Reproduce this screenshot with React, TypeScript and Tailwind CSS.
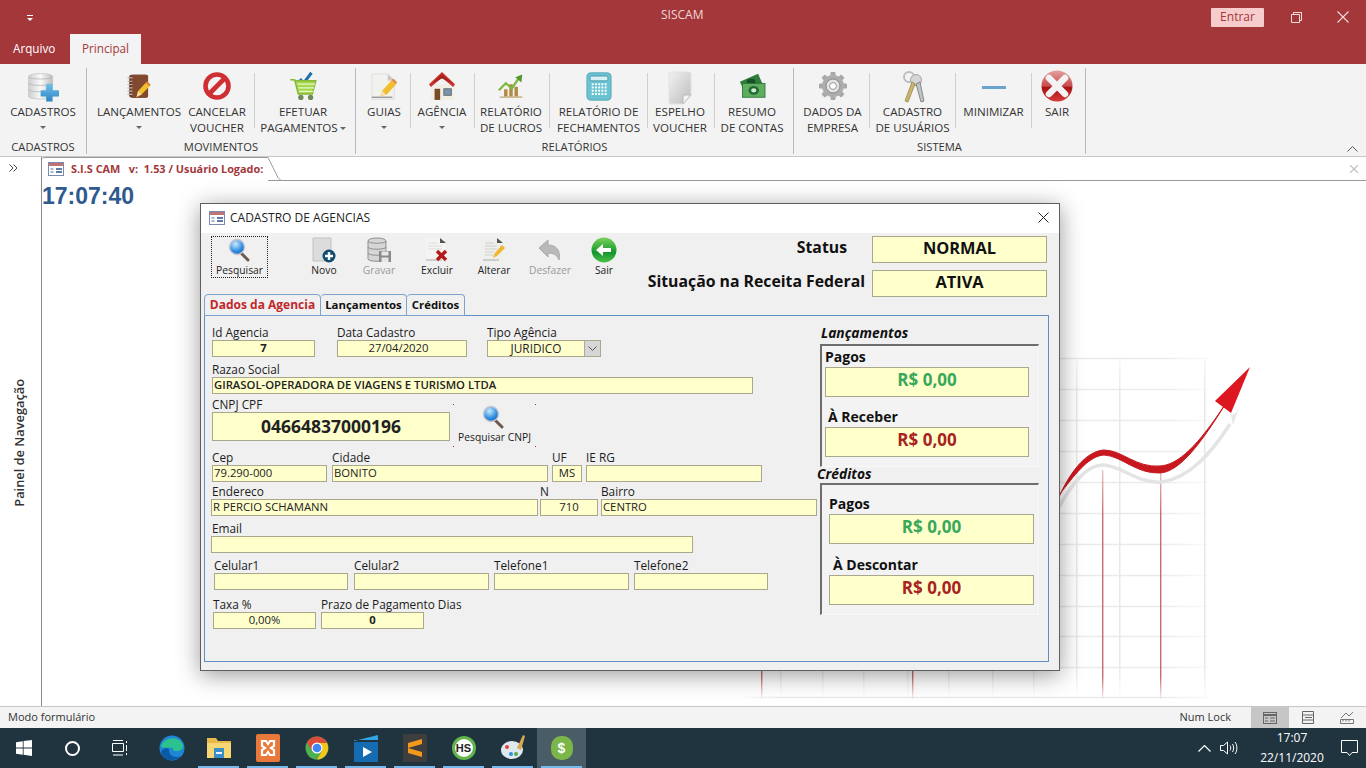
import type { ReactNode } from 'react'

const UI = 'font-["Open_Sans",sans-serif]'

function Db() {
  return (
    <svg className="mt-[2px]" width="32" height="30" viewBox="0 0 40 36">
      <defs>
        <linearGradient id="dbg" x1="0" x2="1"><stop offset="0" stopColor="#cfcfcf" /><stop offset=".5" stopColor="#fafafa" /><stop offset="1" stopColor="#bdbdbd" /></linearGradient>
        <linearGradient id="plusg" x1="0" x2="0" y1="0" y2="1"><stop offset="0" stopColor="#6fc0ea" /><stop offset="1" stopColor="#2f86c4" /></linearGradient>
      </defs>
      <path d="M2 5c0-5 30-5 30 0v25c0 4-30 4-30 0z" fill="url(#dbg)" stroke="#c4c4c4" />
      <path d="M2 5c0 4 30 4 30 0M2 13c0 4 30 4 30 0M2 21c0 4 30 4 30 0" fill="none" stroke="#b5b5b5" />
      <path d="M24 14h8v8h8v8h-8v6h-8v-6h-7v-8h7z" fill="url(#plusg)" />
    </svg>
  )
}

function Notebook() {
  return (
    <svg className="mt-[3px]" width="26" height="28" viewBox="0 0 30 34">
      <rect x="3" y="2" width="23" height="28" rx="3" fill="#6d3d28" />
      <rect x="6" y="2" width="20" height="28" rx="2" fill="#82492f" />
      <path d="M1 6h6M1 10h6M1 14h6M1 18h6M1 22h6M1 26h6" stroke="#bbb" strokeWidth="1.4" />
      <path d="M12 29l2-7 10-11 5 4-11 11z" fill="#f2bf2c" />
      <path d="M12 29l2-7 4 4z" fill="#f7dca0" />
      <path d="M23 12l5 4 1-2-4-4z" fill="#e07f3f" />
    </svg>
  )
}

function NoSign() {
  return (
    <svg className="mt-[1px]" width="30" height="30" viewBox="0 0 30 30">
      <circle cx="15" cy="15" r="11.5" fill="none" stroke="#cf2f33" strokeWidth="4.6" />
      <path d="M7 23L23 7" stroke="#cf2f33" strokeWidth="4.6" />
    </svg>
  )
}

function Cart() {
  return (
    <svg className="mt-[1px]" width="29" height="30" viewBox="0 0 32 34">
      <path d="M12 9l4 5 9-12" fill="none" stroke="#1f6fa8" strokeWidth="3.4" />
      <path d="M1 10h5l4 16h16l4-15H7" fill="#a5d64c" stroke="#86b83a" strokeWidth="1.6" />
      <path d="M9 15h20M10 19h18M11 23h16" stroke="#eaf7c8" strokeWidth="1.4" />
      <circle cx="13" cy="30" r="3" fill="#6f8a5a" />
      <circle cx="24" cy="30" r="3" fill="#6f8a5a" />
    </svg>
  )
}

function DocPen() {
  return (
    <svg className="mt-[2px]" width="28" height="30" viewBox="0 0 30 32">
      <path d="M2 2h17l7 7v20H2z" fill="#f1f1ee" stroke="#ddd" />
      <path d="M19 2l7 7h-7z" fill="#c9c9c4" />
      <path d="M2 27h22" stroke="#999" strokeWidth="1.5" />
      <path d="M11 26l2-6 10-11 5 4-10 11z" fill="#f2bf2c" />
      <path d="M11 26l2-6 4 4z" fill="#f8e2b3" />
      <path d="M23 9l5 4 1-2-4-4z" fill="#e28a46" />
    </svg>
  )
}

function House() {
  return (
    <svg className="mt-[1px]" width="26" height="30" viewBox="0 0 28 32">
      <path d="M2 14h24v17H2z" fill="#f1eee6" />
      <path d="M0 14L14 1l14 13-2 3L14 7 2 17z" fill="#c8352c" />
      <path d="M3 13L14 3l11 10-11-5z" fill="#a6231d" />
      <rect x="6" y="19" width="6" height="12" fill="#7a4a26" />
      <rect x="16" y="19" width="8" height="7" fill="#7895b3" stroke="#666" />
    </svg>
  )
}

function ChartCoins() {
  return (
    <svg className="mt-[2px]" width="28" height="26" viewBox="0 0 30 30">
      <path d="M7 29V20h4v9zM13 29V14h4v15zM19 29V17h4v12z" fill="#b28a45" />
      <path d="M1 21l8-8 7 6 8-12" fill="none" stroke="#7db83a" strokeWidth="2.6" />
      <path d="M20 6l8-3-1 9z" fill="#4f9a2d" />
      <path d="M2 29h26" stroke="#cdbb94" strokeWidth="2" />
    </svg>
  )
}

function Calc() {
  const keys = []
  for (let r = 0; r < 4; r++) for (let c = 0; c < 5; c++) keys.push(<rect key={r + '-' + c} x={7 + c * 4} y={14 + r * 4} width="2.4" height="2.4" fill="#fff" />)
  return (
    <svg className="mt-[2px]" width="26" height="29" viewBox="0 0 32 36">
      <rect x="1" y="1" width="30" height="34" rx="5" fill="#6bc3d2" stroke="#4aa0b2" />
      <rect x="5" y="5" width="22" height="6" rx="2" fill="#d6f0f3" stroke="#3d8fa2" />
      {keys}
    </svg>
  )
}

function BlankPage() {
  return (
    <svg className="mt-[1px]" width="28" height="34" viewBox="0 0 28 34">
      <defs><linearGradient id="pg" x1="0" y1="0" x2="1" y2="1"><stop offset="0" stopColor="#f1f1f1" /><stop offset="1" stopColor="#bdbdbd" /></linearGradient></defs>
      <path d="M3 3a2 2 0 012-2h18a2 2 0 012 2v21l-8 9H5a2 2 0 01-2-2z" fill="url(#pg)" stroke="#e2e2e2" />
      <path d="M25 24l-8 9v-7a2 2 0 012-2z" fill="#f4f4f4" stroke="#bbb" />
    </svg>
  )
}

function Money() {
  return (
    <svg className="mt-[3px]" width="28" height="26" viewBox="0 0 30 30">
      <path d="M1 10L22 1l5 11-21 9z" fill="#2f7d3d" />
      <ellipse cx="14" cy="10" rx="5" ry="3.5" fill="#16502a" />
      <rect x="4" y="12" width="26" height="16" fill="#5fae5f" stroke="#2a7437" />
      <ellipse cx="17" cy="20" rx="6" ry="5" fill="#1f6a33" />
      <ellipse cx="17" cy="20" rx="3" ry="2.5" fill="#cfe8c8" />
    </svg>
  )
}

function Gear() {
  const teeth = [0, 45, 90, 135].map(a => <rect key={a} x="12.5" y="1" width="5" height="28" rx="1" fill="#a8a8a8" transform={`rotate(${a} 15 15)`} />)
  return (
    <svg className="mt-[1px]" width="30" height="30" viewBox="0 0 30 30">
      {teeth}
      <circle cx="15" cy="15" r="11" fill="#adadad" />
      <circle cx="15" cy="15" r="7" fill="#e3e3e3" stroke="#888" />
      <circle cx="15" cy="15" r="3.4" fill="#fff" stroke="#999" />
    </svg>
  )
}

function Keys() {
  return (
    <svg className="mt-[1px]" width="26" height="32" viewBox="0 0 26 32">
      <circle cx="9" cy="6" r="5" fill="none" stroke="#bdbdbd" strokeWidth="2" />
      <circle cx="16" cy="9" r="5.5" fill="#d5d5d5" stroke="#a6a6a6" />
      <path d="M12 11L5 30l3 1 7-18z" fill="#cdb76b" stroke="#8b7a3f" strokeWidth=".7" />
      <path d="M16 13l5 18 3-1-4-19z" fill="#bfc4c4" stroke="#666" strokeWidth=".7" />
    </svg>
  )
}

function MinusIcon() {
  return <div className="mt-[16px] h-[3px] w-[24px] bg-[#6ba3cc]" />
}

function RedX() {
  return (
    <svg width="32" height="32" viewBox="0 0 32 32">
      <defs><linearGradient id="rx" x1="0" x2="0" y1="0" y2="1"><stop offset="0" stopColor="#e3a1a1" /><stop offset=".5" stopColor="#c94b4b" /><stop offset=".55" stopColor="#a51414" /><stop offset="1" stopColor="#d83a3a" /></linearGradient></defs>
      <circle cx="16" cy="16" r="15.5" fill="url(#rx)" />
      <path d="M8 8l16 16M24 8L8 24" stroke="#f3f3f3" strokeWidth="6.5" strokeLinecap="round" />
    </svg>
  )
}

function Magnifier({ size = 24 }: { size?: number }) {
  return (
    <svg width={size} height={size} viewBox="0 0 24 24">
      <defs><radialGradient id="mg" cx=".4" cy=".3" r=".8"><stop offset="0" stopColor="#cdeafb" /><stop offset=".6" stopColor="#2f8fe0" /><stop offset="1" stopColor="#1c5fa8" /></radialGradient></defs>
      <path d="M14 15l7 7" stroke="#6b5a50" strokeWidth="3" strokeLinecap="round" />
      <circle cx="10" cy="9" r="7.5" fill="url(#mg)" stroke="#c6c6d6" strokeWidth="1.4" />
    </svg>
  )
}

function NewDoc() {
  return (
    <svg width="24" height="26" viewBox="0 0 24 26">
      <path d="M1 1h18v23H1z" fill="#dcdcdc" stroke="#c2c2c2" />
      <circle cx="17" cy="19" r="6.5" fill="#0f4c70" />
      <path d="M13 19h8M17 15v8" stroke="#fff" strokeWidth="2.4" />
    </svg>
  )
}

function DbSave() {
  return (
    <svg width="26" height="26" viewBox="0 0 26 26">
      <path d="M2 4c0-4 18-4 18 0v18c0 3-18 3-18 0z" fill="#d6d6d6" stroke="#8f8f8f" />
      <path d="M2 4c0 3 18 3 18 0M2 10c0 3 18 3 18 0M2 16c0 3 18 3 18 0" fill="none" stroke="#8f8f8f" />
      <rect x="13" y="14" width="12" height="11" fill="#8a8a8a" />
      <rect x="15.5" y="14.5" width="7" height="4" fill="#e8e8e8" />
      <rect x="15.5" y="20.5" width="7" height="4.5" fill="#e8e8e8" />
    </svg>
  )
}

function DocX() {
  return (
    <svg width="24" height="26" viewBox="0 0 24 26">
      <path d="M1 1h14l6 5v18H1z" fill="#f4f4f2" />
      <path d="M15 1l6 5h-6z" fill="#555" />
      <path d="M3 6h9M3 9h14M3 12h14" stroke="#ddd" />
      <path d="M1 23h16" stroke="#aaa" />
      <path d="M12 14l9 9M21 14l-9 9" stroke="#b3191b" strokeWidth="3.4" />
    </svg>
  )
}

function DocEdit() {
  return (
    <svg width="24" height="26" viewBox="0 0 24 26">
      <path d="M1 1h14l6 5v18H1z" fill="#efefec" />
      <path d="M15 1l6 5h-6z" fill="#555" />
      <path d="M3 6h9M3 9h12M3 12h12M3 15h9M3 18h9" stroke="#cfcfcf" />
      <path d="M1 23h16" stroke="#aaa" />
      <path d="M11 21l2-5 7-8 3 3-8 8z" fill="#f0b62c" />
    </svg>
  )
}

function UndoGray() {
  return (
    <svg width="24" height="24" viewBox="0 0 24 24">
      <path d="M1 10l9-8v5c8 0 13 5 11 15-2-5-5-7-11-7v4z" fill="#b9b9b9" stroke="#a8a8a8" />
    </svg>
  )
}

function GreenBack() {
  return (
    <svg width="26" height="26" viewBox="0 0 26 26">
      <defs><linearGradient id="gb" x1="0" x2="0" y1="0" y2="1"><stop offset="0" stopColor="#7bd25a" /><stop offset=".6" stopColor="#14962c" /><stop offset="1" stopColor="#4cc24a" /></linearGradient></defs>
      <circle cx="13" cy="13" r="12.5" fill="url(#gb)" />
      <path d="M5 13l7-6v4h8v4h-8v4z" fill="#fff" />
    </svg>
  )
}

function FormIcon({ c = '#a4373a' }: { c?: string }) {
  return (
    <svg width="16" height="14" viewBox="0 0 16 14">
      <rect x=".5" y=".5" width="15" height="13" fill="#fff" stroke="#7b8bb0" />
      <rect x="1" y="1" width="14" height="3" fill={c} opacity=".7" />
      <path d="M2.500 7h3M2.500 10h3" stroke="#4a6fa0" />
      <rect x="8" y="6" width="6" height="2" fill="#5c7cab" />
      <rect x="8" y="9" width="6" height="2" fill="#5c7cab" />
    </svg>
  )
}

function RibbonBtn({ w, icon, l1, l2, caret }: { w: string; icon: ReactNode; l1: string; l2?: string; caret?: boolean }) {
  return (
    <div className={`${w} flex shrink-0 flex-col items-center`}>
      <div className="flex h-[34px] shrink-0 items-start justify-center">{icon}</div>
      <div className="whitespace-nowrap text-center text-[11.600px] leading-[16px] text-[#333]">{l1}</div>
      {l2 ? (
        <div className="whitespace-nowrap text-center text-[11.600px] leading-[16px] text-[#333]">
          {l2}
          {caret && <span className="ml-[2px] inline-block h-0 w-0 border-x-[3px] border-t-[3px] border-x-transparent border-t-[#666] align-middle" />}
        </div>
      ) : (
        caret && <div className="mt-[6px] h-0 w-0 border-x-[3px] border-t-[3px] border-x-transparent border-t-[#666]" />
      )}
    </div>
  )
}

function Sep({ cls = '' }: { cls?: string }) {
  return <div className={`mt-[3px] h-[55px] w-px shrink-0 bg-[#d0d0d0] ${cls}`} />
}

function Group({ w, label, children }: { w: string; label: string; children: ReactNode }) {
  return (
    <div className={`${w} flex h-[86px] shrink-0 flex-col border-r border-[#b9b9b9]`}>
      <div className="flex h-[72px] shrink-0 pt-[2px]">{children}</div>
      <div className="text-center text-[11.200px] leading-[14px] text-[#333]">{label}</div>
    </div>
  )
}

function ToolBtn({ cls, icon, label, off }: { cls: string; icon: ReactNode; label: string; off?: boolean }) {
  return (
    <div className={`${cls} flex h-[42px] w-[54px] shrink-0 flex-col items-center justify-end`}>
      <div className="flex h-[26px] items-center">{icon}</div>
      <div className={`pb-px text-[10.300px] leading-[14px] ${off ? 'text-[#9a9a9a]' : 'text-[#222]'}`}>{label}</div>
    </div>
  )
}

function Field({ label, value, w, h = 'h-[17px]', cls = '', box = '', lbl = '' }: { label: string; value?: string; w: string; h?: string; cls?: string; box?: string; lbl?: string }) {
  return (
    <div className={`${w} ${cls} shrink-0`}>
      <div className={`h-[15px] whitespace-nowrap text-[11.800px] leading-[14px] text-[#1c1c1c] ${lbl}`}>{label}</div>
      <div className={`${h} flex items-center overflow-hidden whitespace-nowrap border border-[#a9a78c] bg-[#ffffcc] px-[1px] pb-px text-[11.300px] text-[#222] ${box}`}>{value}</div>
    </div>
  )
}

function Money2({ label, value, color, cls, w, lbl }: { label: string; value: string; color: string; cls: string; w: string; lbl: string }) {
  return (
    <div className={cls}>
      <div className={`h-[20px] text-[14px] font-bold leading-[20px] text-[#111] ${lbl}`}>{label}</div>
      <div className={`${w} flex h-[30px] items-center justify-center border border-[#a9a78c] bg-[#ffffcc] pb-[4px] text-[17px] font-bold ${color}`}>{value}</div>
    </div>
  )
}

function BgChart() {
  const hs = [358, 389, 420, 451, 482, 513, 544, 575, 606, 636, 667, 697]
  const vs = [780, 822, 863, 907, 948, 992, 1033, 1076, 1119, 1204]
  return (
    <svg className="absolute left-[735px] top-[350px]" width="530" height="355" viewBox="735 350 530 355">
      <defs>
        <linearGradient id="fadeH" gradientUnits="userSpaceOnUse" x1="735" x2="1210" y1="0" y2="0">
          <stop offset="0" stopColor="#ebebeb" stopOpacity="0" />
          <stop offset=".1" stopColor="#ebebeb" />
          <stop offset=".9" stopColor="#ebebeb" />
          <stop offset="1" stopColor="#ebebeb" stopOpacity=".2" />
        </linearGradient>
        <linearGradient id="fadeV" gradientUnits="userSpaceOnUse" x1="0" x2="0" y1="358" y2="700">
          <stop offset="0" stopColor="#e8e8e8" stopOpacity=".3" />
          <stop offset=".1" stopColor="#e8e8e8" />
          <stop offset=".9" stopColor="#e8e8e8" />
          <stop offset="1" stopColor="#e8e8e8" stopOpacity="0" />
        </linearGradient>
        <linearGradient id="fadeR" gradientUnits="userSpaceOnUse" x1="0" x2="0" y1="470" y2="700">
          <stop offset="0" stopColor="#c96a6c" stopOpacity=".4" />
          <stop offset=".2" stopColor="#c96a6c" />
          <stop offset=".9" stopColor="#c96a6c" />
          <stop offset="1" stopColor="#c96a6c" stopOpacity="0" />
        </linearGradient>
      </defs>
      {hs.map(y => <path key={y} d={`M735 ${y}.5H1210`} stroke="url(#fadeH)" strokeWidth="1.400" />)}
      {vs.map(x => <rect key={x} x={x} y="358" width="1.500" height="342" fill="url(#fadeV)" />)}
      {[761, 912, 1102, 1160].map(x => <rect key={x} x={x} y="470" width="1.400" height="230" fill="url(#fadeR)" />)}
      <path d="M1059 507C1075 478 1090 464 1104 465C1122 466 1138 484 1162 482C1190 478 1212 452 1230 424" fill="none" stroke="#e4e4e4" strokeWidth="3.500" />
      <path d="M1059 497C1072 468 1088 451 1104 450C1122 450 1136 468 1160 466C1178 465 1198 446 1226 403C1202 442 1180 472 1160 473C1136 474 1122 456 1104 455C1088 456 1074 476 1059 495z" fill="#c8181f" stroke="#c8181f" />
      <path d="M1236 413L1231 415L1233 425L1240 405z" fill="#e8e8e8" />
      <path d="M1250 367L1215 401L1231 413z" fill="#dc1720" />
    </svg>
  )
}

const taskIcons: ReactNode[] = [
  <svg key="edge" width="26" height="26" viewBox="0 0 26 26"><circle cx="13" cy="13" r="12.500" fill="#1f86d6" /><path d="M2 11C5 2 20 0 24 10c1 4-3 6-7 6-3 0-4-2-3-3-6-1-10 1-12-2z" fill="#2cc28e" /><path d="M10 14c-1 6 5 10 12 7-5 6-18 6-20-4 2-4 6-5 8-3z" fill="#0c59a4" /></svg>,
  <svg key="folder" width="24" height="22" viewBox="0 0 24 22"><path d="M0 1h9l2 3h13v17H0z" fill="#e9b949" /><rect y="6" width="24" height="15" fill="#f7d774" /><rect x="7" y="11" width="10" height="10" fill="#3a8fc8" /><rect x="9" y="15" width="6" height="2" fill="#e9f4fb" /></svg>,
  <svg key="xampp" width="24" height="28" viewBox="0 0 24 28"><rect width="24" height="28" rx="2" fill="#e8793a" /><path d="M6 7h4l2 3 2-3h4v5l-3 2 3 2v5h-4l-2-3-2 3H6v-5l3-2-3-2z" fill="none" stroke="#fff" strokeWidth="2.200" /></svg>,
  <svg key="chrome" width="24" height="26" viewBox="0 0 24 24"><circle cx="12" cy="12" r="11.500" fill="#4caf50" /><path d="M12 .5A11.500 11.500 0 002 6.500l5 8.500 5-8h10A11.500 11.500 0 0012 .5z" fill="#dd4b39" /><path d="M22 7H12l5 8-5 8.500A11.500 11.500 0 0022 7z" fill="#f5c518" /><circle cx="12" cy="12" r="5.500" fill="#fff" /><circle cx="12" cy="12" r="4.300" fill="#4285f4" /></svg>,
  <svg key="film" width="24" height="28" viewBox="0 0 24 28"><path d="M0 7L24 1v5H0z" fill="#32a5e5" /><rect y="8" width="24" height="20" fill="#156cb0" /><path d="M9 13l9 5-9 5z" fill="#fff" /></svg>,
  <svg key="subl" width="24" height="28" viewBox="0 0 24 28"><rect width="24" height="28" fill="#3e3e3e" /><path d="M5 9l14-4v5l-14 4zM5 14l14 4v5L5 19z" fill="#f39a1c" /></svg>,
  <div key="hs" className="flex h-[24px] w-[24px] items-center justify-center rounded-full border-[3px] border-[#5fb54a] bg-white font-['Liberation_Sans',sans-serif] text-[11px] font-bold text-[#222]">HS</div>,
  <svg key="paint" width="26" height="28" viewBox="0 0 26 28"><ellipse cx="12" cy="16" rx="11" ry="9" fill="#dfe7ef" /><circle cx="7" cy="13" r="2" fill="#e2442f" /><circle cx="11" cy="20" r="2" fill="#2f8fd8" /><circle cx="16" cy="20" r="2" fill="#4caf50" /><path d="M17 14L23 1l2 1-4 14z" fill="#d9a84f" /></svg>,
  <div key="dollar" className="flex h-[24px] w-[22px] items-center justify-center rounded-[10px] bg-[#7ab648] font-['Liberation_Sans',sans-serif] text-[14px] font-bold text-white">$</div>,
]

export default function App() {
  return (
    <div className={`relative flex h-[768px] w-[1366px] flex-col overflow-hidden bg-white ${UI}`}>
      {/* title bar */}
      <div className="h-[64px] shrink-0 bg-[#a4373a] text-white">
        <div className="flex h-[34px] items-center">
          <div className="ml-[26px] flex w-[7px] flex-col items-center gap-[2px] pt-[1px]">
            <div className="h-px w-[6px] bg-white" />
            <div className="h-0 w-0 border-x-[3px] border-t-[3px] border-x-transparent border-t-white" />
          </div>
          <div className="ml-[628px] pb-[4px] text-[12px] text-[#f0d6d6]">SISCAM</div>
          <div className="ml-auto flex h-[19px] w-[53px] items-center justify-center rounded-[1px] bg-[#f6cccc] text-[12px] text-[#a4373a]">Entrar</div>
          <div className="ml-[27px] mr-[17px] flex items-center gap-[35px]">
            <svg width="11" height="11" viewBox="0 0 11 11" fill="none" stroke="#f3dede"><path d="M.5 2.500h8v8h-8zM2.500 2.500v-2h8v8h-2" /></svg>
            <svg width="12" height="12" viewBox="0 0 12 12" stroke="#f3dede" strokeWidth="1.100"><path d="M.5.5l11 11M11.500.5l-11 11" /></svg>
          </div>
        </div>
        <div className="flex h-[30px] items-center text-[11.700px]">
          <div className="ml-[13px] w-[57px]">Arquivo</div>
          <div className="flex h-[30px] w-[71px] items-center justify-center bg-[#f3f3f3] text-[#a4373a]">Principal</div>
        </div>
      </div>

      {/* ribbon */}
      <div className="relative flex h-[93px] shrink-0 border-b border-[#c8c8c8] bg-[#f3f3f3] pt-[4px]">
        <Group w="w-[87px]" label="CADASTROS">
          <RibbonBtn w="w-[86px]" icon={<Db />} l1="CADASTROS" caret />
        </Group>
        <Group w="w-[269px]" label="MOVIMENTOS">
          <RibbonBtn w="w-[96px] ml-[4px]" icon={<Notebook />} l1="LANÇAMENTOS" caret />
          <RibbonBtn w="w-[60px]" icon={<NoSign />} l1="CANCELAR" l2="VOUCHER" />
          <Sep cls="ml-[7px]" />
          <RibbonBtn w="w-[96px]" icon={<Cart />} l1="EFETUAR" l2="PAGAMENTOS" caret />
        </Group>
        <Group w="w-[438px]" label="RELATÓRIOS">
          <RibbonBtn w="w-[52px] ml-[2px]" icon={<DocPen />} l1="GUIAS" caret />
          <Sep />
          <RibbonBtn w="w-[62px]" icon={<House />} l1="AGÊNCIA" caret />
          <Sep cls="ml-[1px]" />
          <RibbonBtn w="w-[72px]" icon={<ChartCoins />} l1="RELATÓRIO" l2="DE LUCROS" />
          <Sep cls="ml-[2px]" />
          <RibbonBtn w="w-[97px]" icon={<Calc />} l1="RELATÓRIO DE" l2="FECHAMENTOS" />
          <Sep />
          <RibbonBtn w="w-[64px]" icon={<BlankPage />} l1="ESPELHO" l2="VOUCHER" />
          <Sep cls="ml-[2px]" />
          <RibbonBtn w="w-[74px]" icon={<Money />} l1="RESUMO" l2="DE CONTAS" />
        </Group>
        <Group w="w-[292px]" label="SISTEMA">
          <RibbonBtn w="w-[73px] ml-[2px]" icon={<Gear />} l1="DADOS DA" l2="EMPRESA" />
          <Sep />
          <RibbonBtn w="w-[85px]" icon={<Keys />} l1="CADASTRO" l2="DE USUÁRIOS" />
          <Sep />
          <RibbonBtn w="w-[75px]" icon={<MinusIcon />} l1="MINIMIZAR" />
          <Sep />
          <RibbonBtn w="w-[50px]" icon={<RedX />} l1="SAIR" />
        </Group>
        <svg className="absolute right-[8px] top-[82px]" width="11" height="6" viewBox="0 0 11 6" fill="none" stroke="#555"><path d="M.5 5.500l5-5 5 5" /></svg>
      </div>

      {/* content */}
      <div className="flex min-h-0 flex-1">
        <div className="relative w-[42px] shrink-0 border-r border-[#8a8a8a]">
          <svg className="ml-[9px] mt-[7px]" width="9" height="8" viewBox="0 0 9 8" fill="none" stroke="#444"><path d="M.5.5l3.500 3.500-3.500 3.500M4.500.5l3.500 3.500-3.500 3.500" /></svg>
          <div className="absolute left-[10px] top-[222px] rotate-180 whitespace-nowrap text-[12.800px] font-semibold text-[#333] [writing-mode:vertical-rl]">Painel de Navegação</div>
        </div>
        <div className="min-w-0 flex-1">
          <div className="flex h-[24px] items-center border-b border-[#9a9a9a]">
            <div className="relative flex h-[24px] w-[226px] items-center rounded-tl-[3px] border-t border-[#9a9a9a] bg-white pl-[6px]">
              <FormIcon />
              <span className="ml-[7px] whitespace-pre text-[10.900px] font-bold text-[#a4373a]">S.I.S CAM   v:  1.53 / Usuário Logado:</span>
              <svg className="absolute left-[224px] -top-px" width="18" height="24" viewBox="0 0 18 24" fill="none" stroke="#9a9a9a"><path d="M0 .5h2l10 20 3 3" /></svg>
              <div className="absolute -bottom-[2px] left-0 h-[2px] w-[234px] bg-white" />
            </div>
            <svg className="ml-auto mr-[8px]" width="8" height="8" viewBox="0 0 8 8" stroke="#c4c4c4" strokeWidth="1.300"><path d="M0 0l8 8M8 0L0 8" /></svg>
          </div>
          <div className="font-['Liberation_Sans',sans-serif] text-[23px] font-bold leading-[30px] text-[#2f5a8f]">17:07:40</div>
        </div>
      </div>

      {/* status bar */}
      <div className="flex h-[22px] shrink-0 items-center border-t border-[#c6c6c6] bg-[#f3f3f3] text-[11px] text-[#333]">
        <div className="pl-[8px]">Modo formulário</div>
        <div className="ml-auto">Num Lock</div>
        <div className="ml-[20px] flex h-full w-[38px] items-center justify-center bg-[#c6c6c6]">
          <svg width="14" height="12" viewBox="0 0 14 12"><rect x=".5" y=".5" width="13" height="11" fill="none" stroke="#666" /><path d="M.5 3h13" stroke="#666" strokeWidth="2" /><path d="M2 6h3M2 9h3M7 6h5M7 9h5" stroke="#666" /></svg>
        </div>
        <div className="flex h-full w-[38px] items-center justify-center">
          <svg width="12" height="13" viewBox="0 0 12 13" fill="none" stroke="#666"><path d="M.5.5h11v12H.5zM.5 4h11M.5 9h11M3 6.500h7" /></svg>
        </div>
        <div className="flex h-full w-[39px] items-center justify-center">
          <svg width="14" height="13" viewBox="0 0 14 13" fill="none" stroke="#777"><path d="M.5 8.500h13v4H.5zM3 8.500v2M6 8.500v2M9 8.500v2M1 7l5-5 3 3 4-4" /></svg>
        </div>
      </div>

      {/* taskbar */}
      <div className="flex h-[40px] shrink-0 items-center bg-[#20343f] text-white">
        <div className="flex w-[48px] justify-center">
          <svg width="16" height="16" viewBox="0 0 16 16" fill="#fff"><path d="M0 2.200l6.800-1v6.400H0zM7.600 1L16 0v7.600H7.600zM0 8.400h6.800v6.400L0 13.800zM7.600 8.400H16V16l-8.400-1.200z" /></svg>
        </div>
        <div className="flex w-[48px] justify-center"><div className="h-[15px] w-[15px] rounded-full border-2 border-white" /></div>
        <div className="flex w-[48px] justify-center">
          <svg width="17" height="16" viewBox="0 0 17 16" fill="none" stroke="#fff"><path d="M.5 3.500h11v8H.5zM1 .5h10M1 15h10M14.500 1v2M14.500 5v6M14.500 13v2" /></svg>
        </div>
        <div className="flex w-[50px] justify-center pl-[5px]">{taskIcons[0]}</div>
        {taskIcons.slice(1).map((ic, i) => (
          <div key={i} className={`relative flex h-[40px] w-[49px] items-center justify-center ${i === 7 ? 'bg-[#4a5c66]' : ''}`}>
            {ic}
            <div className="absolute bottom-0 left-[4px] right-[4px] h-[2px] bg-[#76b9ed]" />
          </div>
        ))}
        <svg className="ml-[612px]" width="13" height="7" viewBox="0 0 13 7" fill="none" stroke="#fff" strokeWidth="1.200"><path d="M.5 6.500l6-6 6 6" /></svg>
        <svg className="ml-[9px]" width="18" height="14" viewBox="0 0 18 14" fill="none" stroke="#fff"><path d="M.5 4.500h3l4-3.500v12l-4-3.500h-3zM10 4.500c1 1 1 4 0 5M12.500 3c1.500 2 1.500 6 0 8M15 1c2.500 3 2.500 9 0 12" /></svg>
        <div className="ml-[15px] w-[78px] text-center text-[12px] leading-[20px]">
          <div>17:07</div>
          <div>22/11/2020</div>
        </div>
        <svg className="ml-[10px]" width="17" height="16" viewBox="0 0 17 16" fill="none" stroke="#fff"><path d="M.5.500h16v12H11l-2.500 3-2.500-3H.5z" /></svg>
      </div>

      <BgChart />

      {/* modal */}
      <div className="absolute left-[200px] top-[203px] flex h-[468px] w-[860px] flex-col border border-[#5f5f5f] bg-[#f0f0f0] shadow-[0_4px_22px_rgba(0,0,0,0.4)]">
        <div className="flex h-[29px] shrink-0 items-center bg-white pb-[2px] pl-[8px] text-[12px] text-[#222]">
          <FormIcon />
          <span className="ml-[5px]">CADASTRO DE AGENCIAS</span>
          <svg className="ml-auto mr-[10px]" width="11" height="11" viewBox="0 0 11 11" stroke="#222"><path d="M.5.500l10 10M10.500.500l-10 10" /></svg>
        </div>
        <div className="flex h-[61px] shrink-0 items-start pl-[10px] pt-[3px]">
          <div className="flex h-[42px] w-[57px] shrink-0 flex-col items-center justify-end border border-dotted border-[#222]">
            <div className="flex h-[26px] items-center pr-[2px]"><Magnifier /></div>
            <div className="text-[10.300px] leading-[14px] text-[#222]">Pesquisar</div>
          </div>
          <ToolBtn cls="ml-[29px]" icon={<NewDoc />} label="Novo" />
          <ToolBtn cls="ml-[1px]" icon={<DbSave />} label="Gravar" off />
          <ToolBtn cls="ml-[4px]" icon={<DocX />} label="Excluir" />
          <ToolBtn cls="ml-[3px]" icon={<DocEdit />} label="Alterar" />
          <ToolBtn cls="ml-[2px]" icon={<UndoGray />} label="Desfazer" off />
          <ToolBtn cls="" icon={<GreenBack />} label="Sair" />
          <div className="ml-auto mr-[12px] flex flex-col gap-[7px]">
            <div className="flex items-center justify-end">
              <span className="mr-[25px] pb-[3px] text-[15.800px] font-bold text-[#111]">Status</span>
              <div className="flex h-[27px] w-[175px] items-center justify-center border border-[#a9a78c] bg-[#ffffcc] pb-[2px] text-[16.400px] font-bold text-[#111]">NORMAL</div>
            </div>
            <div className="flex items-center justify-end">
              <span className="mr-[7px] pb-[3px] whitespace-nowrap text-[15.800px] font-bold text-[#111]">Situação na Receita Federal</span>
              <div className="flex h-[27px] w-[175px] items-center justify-center border border-[#a9a78c] bg-[#ffffcc] pb-[2px] text-[16.400px] font-bold text-[#111]">ATIVA</div>
            </div>
          </div>
        </div>
        <div className="relative z-10 flex h-[22px] shrink-0 pl-[3px] text-[11.400px] font-bold">
          <div className="flex w-[117px] items-center justify-center rounded-t-[4px] border border-[#7da2ce] bg-[#f0f0f0] text-[12px] text-[#c0272d]">Dados da Agencia</div>
          <div className="flex w-[86px] items-center justify-center rounded-t-[4px] border border-l-0 border-[#7da2ce] text-[#111]">Lançamentos</div>
          <div className="flex w-[58px] items-center justify-center rounded-t-[4px] border border-l-0 border-[#7da2ce] text-[#111]">Créditos</div>
        </div>
        <div className="-mt-px ml-[3px] flex h-[347px] w-[845px] shrink-0 border border-[#5f8fc0]">
          <div className="w-[614px] shrink-0 pl-[7px] pt-[9px]">
            <div className="flex">
              <Field label="Id Agencia" value="7" w="w-[103px]" box="justify-center font-bold" />
              <Field label="Data Cadastro" value="27/04/2020" w="w-[130px]" cls="ml-[22px]" box="justify-center pr-[8px]" />
              <div className="ml-[20px] w-[114px] shrink-0">
                <div className="h-[15px] text-[11.800px] leading-[14px] text-[#1c1c1c]">Tipo Agência</div>
                <div className="flex h-[17px] border border-[#a9a78c] bg-[#ffffcc] text-[11.800px] text-[#222]">
                  <div className="flex-1 text-center leading-[14px]">JURIDICO</div>
                  <div className="flex w-[16px] items-center justify-center border-l border-[#a9a9a9] bg-[#d6d6d6]">
                    <svg width="9" height="5" viewBox="0 0 9 5" fill="none" stroke="#555"><path d="M.5.500l4 4 4-4" /></svg>
                  </div>
                </div>
              </div>
            </div>
            <Field label="Razao Social" value="GIRASOL-OPERADORA DE VIAGENS E TURISMO LTDA" w="w-[541px]" cls="mt-[5px]" box="font-semibold text-[11.200px]" />
            <div className="mt-[3px] flex">
              <Field label="CNPJ CPF" value="04664837000196" w="w-[238px]" h="h-[29px]" box="justify-center text-[17.500px] font-bold text-[#111]" />
              <div className="relative ml-[3px] mt-[7px] flex h-[43px] w-[83px] flex-col items-center justify-end">
                <div className="absolute left-0 top-0 h-px w-px bg-[#c0272d]" />
                <div className="absolute right-0 top-0 h-px w-px bg-[#c0272d]" />
                <div className="absolute bottom-0 left-0 h-px w-px bg-[#c0272d]" />
                <div className="absolute bottom-0 right-0 h-px w-px bg-[#c0272d]" />
                <div className="pr-[3px]"><Magnifier /></div>
                <div className="mb-[3px] mt-[1px] text-[10.300px] leading-[14px] text-[#222]">Pesquisar CNPJ</div>
              </div>
            </div>
            <div className="mt-[3px] flex">
              <Field label="Cep" value="79.290-000" w="w-[115px]" />
              <Field label="Cidade" value="BONITO" w="w-[216px]" cls="ml-[5px]" />
              <Field label="UF" value="MS" w="w-[30px]" cls="ml-[4px]" box="justify-center" />
              <Field label="IE RG" w="w-[176px]" cls="ml-[4px]" />
            </div>
            <div className="-ml-px mt-[2px] flex">
              <Field label="Endereco" value="R PERCIO SCHAMANN" w="w-[327px]" lbl="pl-px" />
              <Field label="N" value="710" w="w-[58px]" cls="ml-[2px]" box="justify-center" />
              <Field label="Bairro" value="CENTRO" w="w-[216px]" cls="ml-[3px]" />
            </div>
            <Field label="Email" w="w-[482px]" cls="-ml-px mt-[5px]" lbl="pl-px" />
            <div className="ml-[2px] mt-[5px] flex">
              <Field label="Celular1" w="w-[134px]" />
              <Field label="Celular2" w="w-[135px]" cls="ml-[6px]" />
              <Field label="Telefone1" w="w-[135px]" cls="ml-[5px]" />
              <Field label="Telefone2" w="w-[134px]" cls="ml-[5px]" />
            </div>
            <div className="ml-px mt-[7px] flex">
              <Field label="Taxa %" value="0,00%" w="w-[103px]" box="justify-center" />
              <Field label="Prazo de Pagamento Dias" value="0" w="w-[103px]" cls="ml-[5px]" box="justify-center font-bold" />
            </div>
          </div>
          <div className="w-[221px] shrink-0 pt-[10px]">
            <div className="h-[15px] pl-[2px] text-[13.800px] font-bold italic leading-[13px] text-[#111]">Lançamentos</div>
            <div className="ml-px mt-[3px] h-[123px] w-[219px] border-b border-l-2 border-r border-t-2 border-b-[#f8f8f8] border-l-[#6e6e6e] border-r-[#f8f8f8] border-t-[#6e6e6e] bg-[#f3f3f3]">
              <Money2 label="Pagos" value="R$ 0,00" color="text-[#38a85a]" cls="ml-[3px] pt-px" w="w-[204px]" lbl="" />
              <Money2 label="À Receber" value="R$ 0,00" color="text-[#a8231f]" cls="ml-[3px] mt-[10px]" w="w-[204px]" lbl="pl-[3px]" />
            </div>
            <div className="-ml-[2px] h-[14px] text-[13.800px] font-bold italic leading-[14px] text-[#111]">Créditos</div>
            <div className="ml-px mt-[2px] h-[132px] w-[219px] border-b border-l-2 border-r border-t-2 border-b-[#f8f8f8] border-l-[#6e6e6e] border-r-[#f8f8f8] border-t-[#6e6e6e] bg-[#f3f3f3]">
              <Money2 label="Pagos" value="R$ 0,00" color="text-[#38a85a]" cls="ml-[7px] pt-[9px]" w="w-[205px]" lbl="" />
              <Money2 label="À Descontar" value="R$ 0,00" color="text-[#a8231f]" cls="ml-[7px] mt-[11px]" w="w-[205px]" lbl="pl-[4px]" />
            </div>
          </div>
        </div>
      </div>
    </div>
  )
}
